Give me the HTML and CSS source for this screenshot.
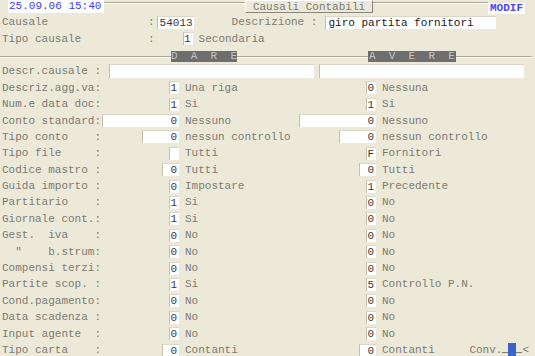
FILE: index.html
```html
<!DOCTYPE html>
<html>
<head>
<meta charset="utf-8">
<link rel="stylesheet" href="styles.css">
</head>
<body>
<div class="screen">
  <div class="top">
    <span class="clock">25.09.06 15:40</span>
    <span class="rule r1"></span>
    <span class="title">Causali Contabili</span>
    <span class="rule r2"></span>
    <span class="mode">MODIF</span>
  </div>

  <div class="row pad">
    <span class="hl">Causale</span><span>:</span>
    <span class="box code">54013</span>
    <span class="hl2">Descrizione :</span>
    <span class="box descin">giro partita fornitori</span>
  </div>

  <div class="row pad">
    <span class="hl">Tipo causale</span><span>:</span>
    <span class="box b1 tc">1</span>
    <span class="tcd">Secondaria</span>
  </div>

  <div class="row heads">
    <span class="fill f1"></span>
    <span class="head dare">D  A  R  E</span>
    <span class="fill f2"></span>
    <span class="head avere">A  V  E  R  E</span>
    <span class="fill f3"></span>
  </div>

  <div class="row pad">
    <span class="lbl">Descr.causale :</span>
    <span class="box wide first"></span>
    <span class="box wide"></span>
  </div>

  <div class="row pad">
    <div class="ca"><span class="lbl">Descriz.agg.va:</span><span class="box b1">1</span></div>
    <div class="cb"><span class="d">Una riga</span><span class="box b1">0</span></div>
    <div class="cc">Nessuna</div>
  </div>
  <div class="row pad">
    <div class="ca"><span class="lbl">Num.e data doc:</span><span class="box b1">1</span></div>
    <div class="cb"><span class="d">Si</span><span class="box b1">1</span></div>
    <div class="cc">Si</div>
  </div>
  <div class="row pad">
    <div class="ca"><span class="lbl">Conto standard:</span><span class="box b4">0</span></div>
    <div class="cb"><span class="d">Nessuno</span><span class="box b4">0</span></div>
    <div class="cc">Nessuno</div>
  </div>
  <div class="row pad">
    <div class="ca"><span class="lbl">Tipo conto    :</span><span class="box b3">0</span></div>
    <div class="cb"><span class="d">nessun controllo</span><span class="box b3">0</span></div>
    <div class="cc">nessun controllo</div>
  </div>
  <div class="row pad">
    <div class="ca"><span class="lbl">Tipo file     :</span><span class="box b1"></span></div>
    <div class="cb"><span class="d">Tutti</span><span class="box b1">F</span></div>
    <div class="cc">Fornitori</div>
  </div>
  <div class="row pad">
    <div class="ca"><span class="lbl">Codice mastro :</span><span class="box b2">0</span></div>
    <div class="cb"><span class="d">Tutti</span><span class="box b2">0</span></div>
    <div class="cc">Tutti</div>
  </div>
  <div class="row pad">
    <div class="ca"><span class="lbl">Guida importo :</span><span class="box b1">0</span></div>
    <div class="cb"><span class="d">Impostare</span><span class="box b1">1</span></div>
    <div class="cc">Precedente</div>
  </div>
  <div class="row pad">
    <div class="ca"><span class="lbl">Partitario    :</span><span class="box b1">1</span></div>
    <div class="cb"><span class="d">Si</span><span class="box b1">0</span></div>
    <div class="cc">No</div>
  </div>
  <div class="row pad">
    <div class="ca"><span class="lbl">Giornale cont.:</span><span class="box b1">1</span></div>
    <div class="cb"><span class="d">Si</span><span class="box b1">0</span></div>
    <div class="cc">No</div>
  </div>
  <div class="row pad">
    <div class="ca"><span class="lbl">Gest.  iva    :</span><span class="box b1">0</span></div>
    <div class="cb"><span class="d">No</span><span class="box b1">0</span></div>
    <div class="cc">No</div>
  </div>
  <div class="row pad">
    <div class="ca"><span class="lbl">  "    b.strum:</span><span class="box b1">0</span></div>
    <div class="cb"><span class="d">No</span><span class="box b1">0</span></div>
    <div class="cc">No</div>
  </div>
  <div class="row pad">
    <div class="ca"><span class="lbl">Compensi terzi:</span><span class="box b1">0</span></div>
    <div class="cb"><span class="d">No</span><span class="box b1">0</span></div>
    <div class="cc">No</div>
  </div>
  <div class="row pad">
    <div class="ca"><span class="lbl">Partite scop. :</span><span class="box b1">1</span></div>
    <div class="cb"><span class="d">Si</span><span class="box b1">5</span></div>
    <div class="cc">Controllo P.N.</div>
  </div>
  <div class="row pad">
    <div class="ca"><span class="lbl">Cond.pagamento:</span><span class="box b1">0</span></div>
    <div class="cb"><span class="d">No</span><span class="box b1">0</span></div>
    <div class="cc">No</div>
  </div>
  <div class="row pad">
    <div class="ca"><span class="lbl">Data scadenza :</span><span class="box b1">0</span></div>
    <div class="cb"><span class="d">No</span><span class="box b1">0</span></div>
    <div class="cc">No</div>
  </div>
  <div class="row pad">
    <div class="ca"><span class="lbl">Input agente  :</span><span class="box b1">0</span></div>
    <div class="cb"><span class="d">No</span><span class="box b1">0</span></div>
    <div class="cc">No</div>
  </div>
  <div class="row pad">
    <div class="ca"><span class="lbl">Tipo carta    :</span><span class="box b2">0</span></div>
    <div class="cb"><span class="d">Contanti</span><span class="box b2">0</span></div>
    <div class="cc">Contanti</div>
    <div class="conv">
      <span>Conv.</span><span class="wire"></span><span class="cur"></span><span class="wire"></span><span>&lt;</span>
    </div>
  </div>
</div>
</body>
</html>
```

FILE: styles.css
```css
html, body {
  margin: 0;
  padding: 0;
  background: #ece9d8;
}
body {
  width: 535px;
  height: 356px;
  overflow: hidden;
  font-family: "Courier New", "Nimbus Mono PS", "Nimbus Mono L", "FreeMono", "Liberation Mono", monospace;
  font-size: 11px;
  color: #7c7c74;
}
.screen {
  display: flex;
  flex-direction: column;
}
.top {
  display: flex;
  height: 14px;
  align-items: flex-start;
  white-space: nowrap;
}
.clock {
  margin-left: 8px;
  width: 96px;
  height: 13px;
  line-height: 13px;
  background: #fff;
  color: #3c3cf0;
  font-size: 11px;
  padding-left: 1px;
  box-sizing: border-box;
  white-space: nowrap;
  overflow: hidden;
}
.rule {
  margin-top: 2px;
  height: 0;
  border-top: 1px solid #aca899;
  border-bottom: 1px solid #fff;
}
.r1 { width: 141px; }
.r2 { width: 115px; }
.title {
  width: 128px;
  height: 13px;
  line-height: 12px;
  box-sizing: border-box;
  text-align: center;
  border: 1px solid;
  border-color: #fff #8a877a #8a877a #fff;
  background: #ece9d8;
  color: #7c7c74;
}
.mode {
  margin-top: 3px;
  width: 37px;
  height: 11px;
  line-height: 11px;
  background: #fff;
  color: #4646f0;
  font-weight: bold;
  font-size: 11px;
  text-align: center;
}
.row {
  display: flex;
  align-items: center;
  height: 16.4px;
  white-space: pre;
}
.pad { padding-left: 2px; }
.hl { width: 146px; }
.hl2 { margin-left: 38px; }
.box {
  display: block;
  height: 13px;
  line-height: 13px;
  box-sizing: border-box;
  background: #fff;
  border-left: 1px solid #c4c0b0;
  border-top: 1px solid #dcd8c8;
  color: #3a3a3a;
  text-align: right;
  padding-right: 2px;
}
.code {
  margin-left: 2px;
  width: 37px;
  text-align: left;
  padding-left: 2px;
}
.descin {
  margin-left: 8px;
  width: 171px;
  text-align: left;
  padding-left: 2px;
  color: #202020;
}
.tc { margin-left: 28px; }
.tcd { margin-left: 6px; }
.heads { align-items: flex-start; }
.fill {
  margin-top: 9px;
  height: 0;
  border-top: 1px solid #aca899;
  border-bottom: 1px solid #fff;
}
.f1 { width: 171px; }
.f2 { width: 131px; }
.f3 { width: 76px; }
.head {
  margin-top: 4px;
  height: 11px;
  line-height: 11px;
  background: #6e6e6e;
  color: #c4c4c4;
  overflow: hidden;
}
.dare { width: 66px; }
.avere { width: 87px; padding-left: 1px; }
.wide { width: 205px; height: 14px; }
.first { margin-left: 8px; margin-right: 5px; }
.ca {
  width: 178px;
  display: flex;
  align-items: center;
}
.ca .box, .cb .box { margin-left: auto; margin-right: 1px; }
.cb {
  width: 197px;
  display: flex;
  align-items: center;
}
.d { padding-left: 5px; }
.cc { padding-left: 5px; }
.b1 { width: 10px; }
.b2 { width: 17px; }
.b3 { width: 37px; }
.b4 { width: 77px; }
.conv {
  margin-left: auto;
  margin-right: 6px;
  display: flex;
  align-items: center;
}
.wire {
  width: 6px;
  height: 0;
  border-top: 1px solid #7c7c74;
  margin-top: 4px;
}
.cur {
  width: 8px;
  height: 14px;
  background: #3a64c8;
}
```
